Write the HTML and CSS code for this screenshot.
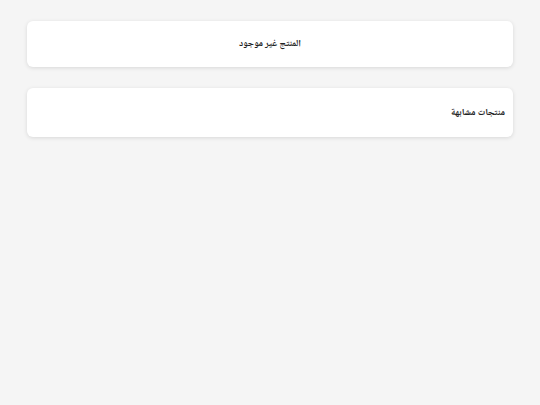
FILE: index.html
```html
<!DOCTYPE html>
<html lang="ar" dir="rtl">
<head>
  <meta charset="UTF-8">
  <title>المنتج غير موجود</title>
  <link rel="stylesheet" href="styles.css">
</head>
<body>
  <div class="page">
    <div class="card not-found">
      <h1 class="not-found-title">المنتج غير موجود</h1>
    </div>
    <div class="card related">
      <h2 class="related-title">منتجات مشابهة</h2>
      <div class="related-grid"></div>
    </div>
  </div>
</body>
</html>
```

FILE: styles.css
```css
* {
  margin: 0;
  padding: 0;
  box-sizing: border-box;
}

html, body {
  background: #f5f5f5;
  color: #222222;
  font-family: "Noto Naskh Arabic", "Liberation Sans", serif;
}

.page {
  display: flex;
  flex-direction: column;
  gap: 21px;
  padding: 21px 27px;
}

.card {
  background: #ffffff;
  border-radius: 6px;
  box-shadow: 0 1px 4px rgba(0, 0, 0, 0.12);
}

.not-found {
  height: 46px;
  display: flex;
  align-items: center;
  justify-content: center;
}

.not-found-title {
  font-size: 9.5px;
  font-weight: bold;
}

.related {
  height: 49px;
  padding: 17px 8px 0;
}

.related-title {
  font-size: 9.5px;
  font-weight: bold;
}
```
